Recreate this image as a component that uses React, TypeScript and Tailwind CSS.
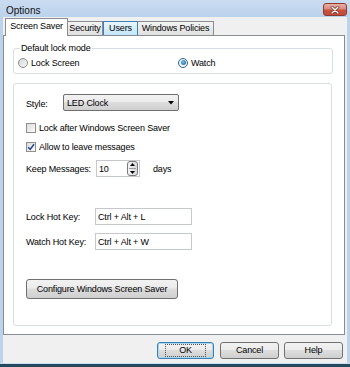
import React from "react";

function Radio({ checked }: { checked?: boolean }) {
  return (
    <span
      className={
        "w-[10px] h-[10px] rounded-full border flex items-center justify-center shrink-0 " +
        (checked
          ? "border-[#2c628b] bg-gradient-to-br from-[#e6eef7] to-[#ffffff]"
          : "border-[#8c8c8c] bg-gradient-to-br from-[#d8d8d8] to-[#f6f6f6]")
      }
    >
      {checked && (
        <span className="w-[5px] h-[5px] rounded-full bg-[radial-gradient(circle_at_40%_40%,#7cc4f4,#0e4a86)]" />
      )}
    </span>
  );
}

function Check({ checked }: { checked?: boolean }) {
  return (
    <span className="w-[10px] h-[10px] border border-[#8e8f8f] bg-gradient-to-br from-[#dcdcdc] to-[#fbfbfb] shrink-0 flex items-center justify-center">
      {checked && (
        <svg width="8" height="8" viewBox="0 0 8 8">
          <path d="M1.2 4.2 L3.2 6.4 L7 1.2" fill="none" stroke="#21468a" strokeWidth="1.5" />
        </svg>
      )}
    </span>
  );
}

function Btn({ children, w, def, extra }: { children: React.ReactNode; w: string; def?: boolean; extra?: string }) {
  return (
    <div
      className={
        w +
        " h-[17px] rounded-[3px] border flex items-center justify-center text-[9px] leading-none bg-[linear-gradient(#f2f2f2_0%,#ebebeb_45%,#dddddd_50%,#cfcfcf_100%)] " +
        (def ? "border-[#3c7fb1] shadow-[inset_0_0_0_1px_#a7d8f3]" : "border-[#707070]") +
        " " +
        (extra || "")
      }
    >
      {children}
    </div>
  );
}

export default function App() {
  return (
    <div className="w-[350px] h-[367px] flex flex-col bg-[#bcd3ec] font-['Liberation_Sans',Arial,sans-serif] text-black overflow-hidden tracking-[-0.15px]">
      {/* Title bar */}
      <div className="h-[17px] flex items-start pl-[6px] pr-[3px] bg-gradient-to-b from-[#cadcf1] to-[#bbd2ec] shrink-0">
        <span className="text-[10px] leading-none mt-[6px] text-[#111] tracking-normal">Options</span>
        <div className="ml-auto mt-[3px] w-[24px] h-[13px] rounded-[3px] border border-[#8a3b30] bg-[linear-gradient(#eab0a4_0%,#d98a7b_45%,#c9503f_55%,#c94a3a_100%)] flex items-center justify-center">
          <svg width="10" height="8" viewBox="0 0 10 8">
            <path d="M2 1 L8 7 M8 1 L2 7" stroke="#5b1a12" strokeWidth="2.6" strokeLinecap="round" />
            <path d="M2 1 L8 7 M8 1 L2 7" stroke="#ffffff" strokeWidth="1.5" strokeLinecap="round" />
          </svg>
        </div>
      </div>

      {/* Client area */}
      <div className="flex-1 flex flex-col mx-[3px] bg-[#f0f0f0]">
        {/* Tabs */}
        <div className="h-[18px] flex items-end pl-[2px] shrink-0 text-[9px] leading-none">
          <div className="relative z-10 -mb-px w-[63px] h-[18px] bg-white border border-b-0 border-[#898c95] flex items-center justify-center pb-[2px]">
            Screen Saver
          </div>
          <div className="w-[35px] h-[14px] border-t border-r border-[#898c95] bg-[linear-gradient(#f3f3f3,#e0e0e0)] flex items-center justify-center">
            Security
          </div>
          <div className="w-[35px] h-[14px] border border-b-0 border-[#3c7fb1] bg-[linear-gradient(#eaf6fd,#c2e6fb)] flex items-center justify-center">
            Users
          </div>
          <div className="w-[76px] h-[14px] border-t border-r border-[#898c95] bg-[linear-gradient(#f3f3f3,#e0e0e0)] flex items-center justify-center">
            Windows Policies
          </div>
        </div>

        {/* Panel */}
        <div className="w-[342px] h-[300px] bg-white border border-[#898c95] flex flex-col shrink-0 text-[9px] leading-[12px]">
          {/* Group 1 */}
          <div className="relative mt-[12px] ml-[9px] w-[320px] h-[26px] border border-[#d5dfe5] rounded-[3px] flex items-center pt-[3px] pl-[4px]">
            <span className="absolute left-[6px] -top-[7px] bg-white px-[1px]">Default lock mode</span>
            <div className="w-[160px] flex items-center gap-[3px]">
              <Radio />
              <span>Lock Screen</span>
            </div>
            <div className="flex items-center gap-[3px]">
              <Radio checked />
              <span>Watch</span>
            </div>
          </div>

          {/* Group 2 */}
          <div className="mt-[9px] ml-[9px] w-[319px] h-[243px] border border-[#d5dfe5] rounded-[3px] flex flex-col pl-[12px]">
            <div className="mt-[10px] flex items-start">
              <span className="w-[37px] pt-[4px]">Style:</span>
              <div className="w-[116px] h-[17px] rounded-[2px] border border-[#707070] bg-[linear-gradient(#f2f2f2_0%,#ebebeb_45%,#dddddd_50%,#cfcfcf_100%)] flex items-center pl-[3px] pr-[4px]">
                <span>LED Clock</span>
                <svg className="ml-auto" width="6" height="4" viewBox="0 0 6 4">
                  <path d="M0 0 H6 L3 3.5 Z" fill="#000" />
                </svg>
              </div>
            </div>

            <div className="mt-[11px] h-[12px] flex items-center gap-[3px]">
              <Check />
              <span>Lock after Windows Screen Saver</span>
            </div>
            <div className="mt-[7px] h-[12px] flex items-center gap-[3px]">
              <Check checked />
              <span>Allow to leave messages</span>
            </div>

            <div className="mt-[7px] h-[17px] flex items-center">
              <span className="w-[70px]">Keep Messages:</span>
              <div className="w-[44px] h-[17px] border border-[#c5c8ce] bg-white flex items-center pl-[2px] pr-[1px]">
                <span>10</span>
                <div className="ml-auto w-[11px] h-[15px] rounded-[3px] border border-[#7a7a7a] bg-[linear-gradient(90deg,#f4f4f4,#d8d8d8)] flex flex-col items-center justify-center gap-[2px]">
                  <svg width="5" height="3" viewBox="0 0 5 3">
                    <path d="M0 3 H5 L2.5 0 Z" fill="#000" />
                  </svg>
                  <span className="w-[7px] h-px bg-[#9a9a9a]" />
                  <svg width="5" height="3" viewBox="0 0 5 3">
                    <path d="M0 0 H5 L2.5 3 Z" fill="#000" />
                  </svg>
                </div>
              </div>
              <span className="ml-[13px]">days</span>
            </div>

            <div className="mt-[31px] h-[17px] flex items-center">
              <span className="w-[69px]">Lock Hot Key:</span>
              <div className="w-[97px] h-[17px] border border-[#c5c8ce] bg-white flex items-center pl-[2px]">
                Ctrl + Alt + L
              </div>
            </div>
            <div className="mt-[8px] h-[17px] flex items-center">
              <span className="w-[69px]">Watch Hot Key:</span>
              <div className="w-[97px] h-[17px] border border-[#c5c8ce] bg-white flex items-center pl-[2px]">
                Ctrl + Alt + W
              </div>
            </div>

            <div className="mt-[29px]">
              <div className="w-[152px] h-[20px] rounded-[3px] border border-[#707070] bg-[linear-gradient(#f2f2f2_0%,#ebebeb_45%,#dddddd_50%,#cfcfcf_100%)] flex items-center justify-center">
                Configure Windows Screen Saver
              </div>
            </div>
          </div>
        </div>

        {/* Bottom buttons */}
        <div className="flex justify-end pr-[4px] mt-[7px]">
          <Btn w="w-[57px]" def>
            <span className="px-[14px] py-[2px] outline outline-1 outline-dotted outline-[#555] -outline-offset-1">OK</span>
          </Btn>
          <Btn w="w-[59px]" extra="ml-[6px]">Cancel</Btn>
          <Btn w="w-[59px]" extra="ml-[5px]">Help</Btn>
        </div>
      </div>

      {/* Bottom frame */}
      <div className="h-[4px] shrink-0 border-t border-[#c9dcf1] bg-[#24495c]" />
    </div>
  );
}
